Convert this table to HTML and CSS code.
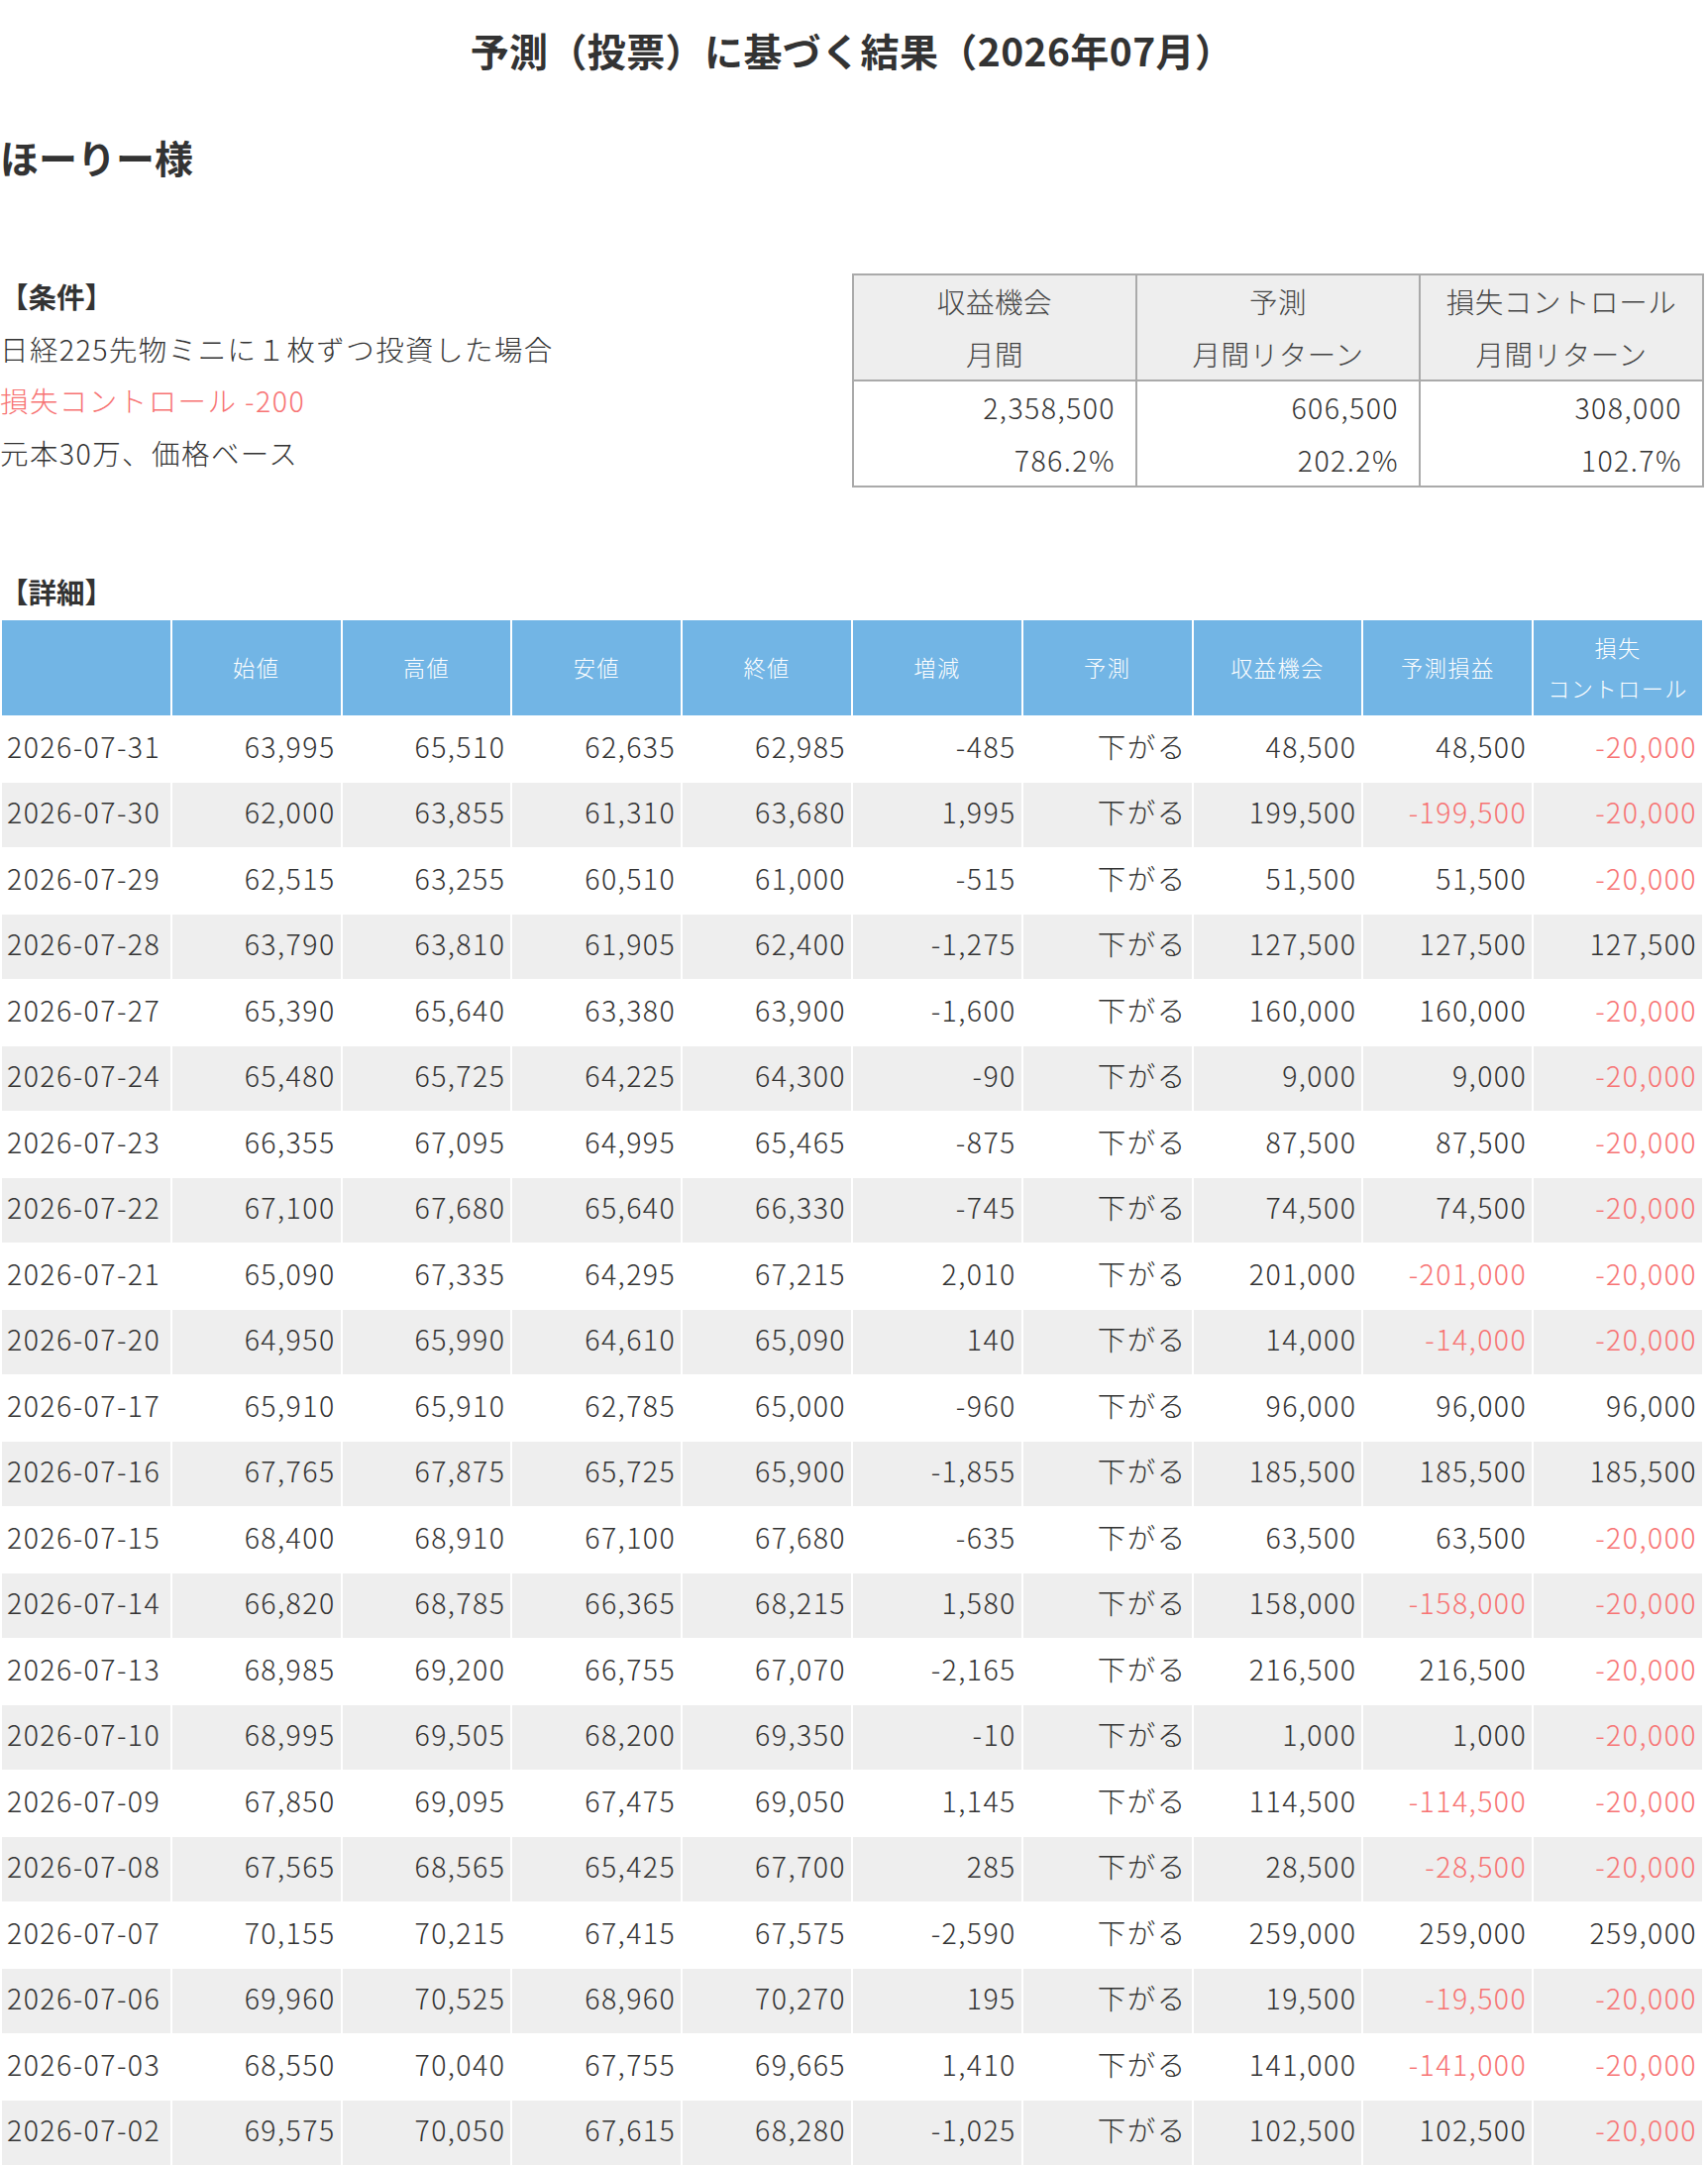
FILE: index.html
```html
<!DOCTYPE html>
<html lang="ja">
<head>
<meta charset="utf-8">
<title>予測（投票）に基づく結果（2026年07月）</title>
<link rel="stylesheet" href="styles.css">
</head>
<body>
<div class="page">
  <h1 class="title">予測（投票）に基づく結果（2026年07月）</h1>
  <h2 class="user">ほーりー様</h2>

  <section class="conditions">
    <div class="cond-text">
      <div class="label">【条件】</div>
      <div class="line">日経225先物ミニに１枚ずつ投資した場合</div>
      <div class="line neg">損失コントロール -200</div>
      <div class="line">元本30万、価格ベース</div>
    </div>
    <table class="summary">
      <thead>
        <tr>
          <th>収益機会<br>月間</th>
          <th>予測<br>月間リターン</th>
          <th>損失コントロール<br>月間リターン</th>
        </tr>
      </thead>
      <tbody>
        <tr>
          <td>2,358,500<br>786.2%</td>
          <td>606,500<br>202.2%</td>
          <td>308,000<br>102.7%</td>
        </tr>
      </tbody>
    </table>
  </section>

  <div class="label detail-label">【詳細】</div>
  <table class="detail">
    <thead>
      <tr>
        <th></th><th>始値</th><th>高値</th><th>安値</th><th>終値</th><th>増減</th><th>予測</th><th>収益機会</th><th>予測損益</th><th>損失<br>コントロール</th>
      </tr>
    </thead>
    <tbody>
      <tr><td class="date">2026-07-31</td><td>63,995</td><td>65,510</td><td>62,635</td><td>62,985</td><td>-485</td><td>下がる</td><td>48,500</td><td>48,500</td><td class="neg">-20,000</td></tr>
      <tr><td class="date">2026-07-30</td><td>62,000</td><td>63,855</td><td>61,310</td><td>63,680</td><td>1,995</td><td>下がる</td><td>199,500</td><td class="neg">-199,500</td><td class="neg">-20,000</td></tr>
      <tr><td class="date">2026-07-29</td><td>62,515</td><td>63,255</td><td>60,510</td><td>61,000</td><td>-515</td><td>下がる</td><td>51,500</td><td>51,500</td><td class="neg">-20,000</td></tr>
      <tr><td class="date">2026-07-28</td><td>63,790</td><td>63,810</td><td>61,905</td><td>62,400</td><td>-1,275</td><td>下がる</td><td>127,500</td><td>127,500</td><td>127,500</td></tr>
      <tr><td class="date">2026-07-27</td><td>65,390</td><td>65,640</td><td>63,380</td><td>63,900</td><td>-1,600</td><td>下がる</td><td>160,000</td><td>160,000</td><td class="neg">-20,000</td></tr>
      <tr><td class="date">2026-07-24</td><td>65,480</td><td>65,725</td><td>64,225</td><td>64,300</td><td>-90</td><td>下がる</td><td>9,000</td><td>9,000</td><td class="neg">-20,000</td></tr>
      <tr><td class="date">2026-07-23</td><td>66,355</td><td>67,095</td><td>64,995</td><td>65,465</td><td>-875</td><td>下がる</td><td>87,500</td><td>87,500</td><td class="neg">-20,000</td></tr>
      <tr><td class="date">2026-07-22</td><td>67,100</td><td>67,680</td><td>65,640</td><td>66,330</td><td>-745</td><td>下がる</td><td>74,500</td><td>74,500</td><td class="neg">-20,000</td></tr>
      <tr><td class="date">2026-07-21</td><td>65,090</td><td>67,335</td><td>64,295</td><td>67,215</td><td>2,010</td><td>下がる</td><td>201,000</td><td class="neg">-201,000</td><td class="neg">-20,000</td></tr>
      <tr><td class="date">2026-07-20</td><td>64,950</td><td>65,990</td><td>64,610</td><td>65,090</td><td>140</td><td>下がる</td><td>14,000</td><td class="neg">-14,000</td><td class="neg">-20,000</td></tr>
      <tr><td class="date">2026-07-17</td><td>65,910</td><td>65,910</td><td>62,785</td><td>65,000</td><td>-960</td><td>下がる</td><td>96,000</td><td>96,000</td><td>96,000</td></tr>
      <tr><td class="date">2026-07-16</td><td>67,765</td><td>67,875</td><td>65,725</td><td>65,900</td><td>-1,855</td><td>下がる</td><td>185,500</td><td>185,500</td><td>185,500</td></tr>
      <tr><td class="date">2026-07-15</td><td>68,400</td><td>68,910</td><td>67,100</td><td>67,680</td><td>-635</td><td>下がる</td><td>63,500</td><td>63,500</td><td class="neg">-20,000</td></tr>
      <tr><td class="date">2026-07-14</td><td>66,820</td><td>68,785</td><td>66,365</td><td>68,215</td><td>1,580</td><td>下がる</td><td>158,000</td><td class="neg">-158,000</td><td class="neg">-20,000</td></tr>
      <tr><td class="date">2026-07-13</td><td>68,985</td><td>69,200</td><td>66,755</td><td>67,070</td><td>-2,165</td><td>下がる</td><td>216,500</td><td>216,500</td><td class="neg">-20,000</td></tr>
      <tr><td class="date">2026-07-10</td><td>68,995</td><td>69,505</td><td>68,200</td><td>69,350</td><td>-10</td><td>下がる</td><td>1,000</td><td>1,000</td><td class="neg">-20,000</td></tr>
      <tr><td class="date">2026-07-09</td><td>67,850</td><td>69,095</td><td>67,475</td><td>69,050</td><td>1,145</td><td>下がる</td><td>114,500</td><td class="neg">-114,500</td><td class="neg">-20,000</td></tr>
      <tr><td class="date">2026-07-08</td><td>67,565</td><td>68,565</td><td>65,425</td><td>67,700</td><td>285</td><td>下がる</td><td>28,500</td><td class="neg">-28,500</td><td class="neg">-20,000</td></tr>
      <tr><td class="date">2026-07-07</td><td>70,155</td><td>70,215</td><td>67,415</td><td>67,575</td><td>-2,590</td><td>下がる</td><td>259,000</td><td>259,000</td><td>259,000</td></tr>
      <tr><td class="date">2026-07-06</td><td>69,960</td><td>70,525</td><td>68,960</td><td>70,270</td><td>195</td><td>下がる</td><td>19,500</td><td class="neg">-19,500</td><td class="neg">-20,000</td></tr>
      <tr><td class="date">2026-07-03</td><td>68,550</td><td>70,040</td><td>67,755</td><td>69,665</td><td>1,410</td><td>下がる</td><td>141,000</td><td class="neg">-141,000</td><td class="neg">-20,000</td></tr>
      <tr><td class="date">2026-07-02</td><td>69,575</td><td>70,050</td><td>67,615</td><td>68,280</td><td>-1,025</td><td>下がる</td><td>102,500</td><td>102,500</td><td class="neg">-20,000</td></tr>
    </tbody>
  </table>
</div>
</body>
</html>
```

FILE: styles.css
```css
html, body {
  margin: 0;
  padding: 0;
  background: #ffffff;
}

body {
  font-family: "Noto Sans CJK JP", "Noto Sans", sans-serif;
  color: #333333;
  font-size: 28.5px;
  font-weight: 300;
  letter-spacing: 0.05em;
}

.page {
  width: 1720px;
}

.title {
  margin: 0;
  padding-top: 20px;
  font-size: 39px;
  line-height: 60px;
  font-weight: 700;
  text-align: center;
  letter-spacing: 0.01em;
}

.user {
  margin: 48px 0 0 0;
  font-size: 39px;
  line-height: 60px;
  font-weight: 700;
  letter-spacing: 0;
}

.conditions {
  display: flex;
  align-items: flex-start;
  margin-top: 88px;
}

.cond-text {
  width: 860px;
  line-height: 52.5px;
  margin-top: -3px;
}

.label {
  font-weight: 700;
  line-height: 52.5px;
  letter-spacing: 0;
}

.neg {
  color: #f77373;
}

.summary {
  width: 860px;
  border-collapse: collapse;
  table-layout: fixed;
  border: 2px solid #aaaaaa;
}

.summary th,
.summary td {
  border: 2px solid #aaaaaa;
  padding: 0;
  line-height: 52.5px;
}

.summary th {
  background: #eeeeee;
  font-weight: 300;
  text-align: center;
  color: #444444;
  letter-spacing: 0.02em;
}

.summary td {
  text-align: right;
  padding-right: 20px;
}

.detail-label {
  margin-top: 79px;
}

.detail {
  width: 1720px;
  border-collapse: collapse;
  table-layout: fixed;
}

.detail th,
.detail td {
  border: 2px solid #ffffff;
}

.detail th {
  background: #72b5e5;
  color: #ffffff;
  font-weight: 300;
  font-size: 22.2px;
  line-height: 41px;
  padding: 7px 4px;
  text-align: center;
}

.detail td {
  line-height: 52.5px;
  padding: 3px 5px 9px 4px;
  text-align: right;
  white-space: nowrap;
}

.detail td.date {
  text-align: left;
  padding-left: 5px;
}

.detail tbody tr:nth-child(even) td {
  background: #eeeeee;
}
```
